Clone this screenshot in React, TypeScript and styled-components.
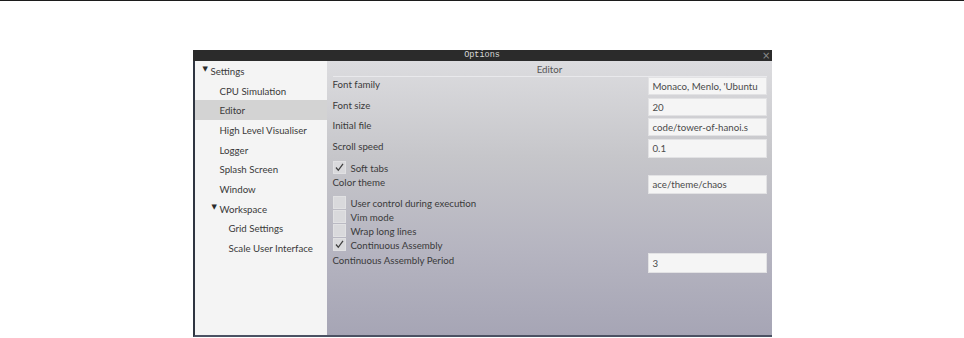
import React from 'react';
import styled, { createGlobalStyle } from 'styled-components';

const GlobalStyle = createGlobalStyle`
    html, body {
        margin: 0;
        padding: 0;
        background: #ffffff;
    }
    body {
        font-family: Lato, 'Noto Sans', sans-serif;
    }
`;

const Page = styled.div`
    display: flex;
    flex-direction: column;
    align-items: center;
    width: 964px;
    height: 338px;
    overflow: hidden;
    border-top: 1px solid #1c1c1c;
    box-sizing: border-box;
`;

const Window = styled.div`
    margin-top: 49px;
    width: 579px;
    display: flex;
    flex-direction: column;
    border-left: 2px solid #2f3541;
    border-bottom: 2px solid #4b5263;
    box-sizing: border-box;
`;

const TitleBar = styled.div`
    position: relative;
    height: 11px;
    background: #2b2b2b;
    display: flex;
    align-items: center;
    justify-content: center;
    color: #d8d8d8;
    font-family: 'Liberation Mono', 'DejaVu Sans Mono', monospace;
    font-size: 8.5px;
    line-height: 11px;
    margin-left: -2px;
`;

const CloseGlyph = styled.span`
    position: absolute;
    right: 1px;
    top: 0;
    color: #8c8c8c;
    font-family: 'DejaVu Sans', sans-serif;
    font-size: 10px;
    line-height: 11px;
`;

const Body = styled.div`
    display: flex;
    height: 274px;
`;

const Sidebar = styled.div`
    width: 132px;
    background: #f4f4f4;
    display: flex;
    flex-direction: column;
`;

const TreeRow = styled.div<{ level: number; selected?: boolean }>`
    display: flex;
    align-items: center;
    height: 19.7px;
    padding-left: ${p => 8 + p.level * 9}px;
    background: ${p => (p.selected ? '#d3d3d3' : 'transparent')};
    color: #3a3a3a;
    font-size: 9.7px;
    white-space: nowrap;
`;

const Arrow = styled.span`
    display: inline-block;
    width: 8px;
    font-family: 'DejaVu Sans', sans-serif;
    font-size: 7px;
    color: #2a2a2a;
    margin-top: -4px;
`;

const Content = styled.div`
    flex: 1;
    display: flex;
    flex-direction: column;
    padding: 0 5px 0 6px;
    background: linear-gradient(180deg, #dcdcdf 0%, #c6c6ca 35%, #b5b4c0 70%, #a6a5b5 100%);
    font-size: 9.7px;
    color: #3a3a3a;
`;

const PanelHeader = styled.div`
    height: 15px;
    display: flex;
    align-items: center;
    justify-content: center;
    color: #555555;
    border-bottom: 1px solid #e9e9ec;
`;

const FieldRow = styled.div<{ top?: number; bottom?: number }>`
    display: flex;
    justify-content: space-between;
    align-items: flex-start;
    margin-top: ${p => p.top ?? 0}px;
    margin-bottom: ${p => p.bottom ?? 2.5}px;
`;

const Label = styled.div`
    line-height: 14px;
    white-space: nowrap;
`;

const Input = styled.div<{ h?: number }>`
    width: 119px;
    height: ${p => p.h ?? 18}px;
    box-sizing: border-box;
    background: #f5f5f5;
    border: 1px solid #e2e2e4;
    color: #4a4a4a;
    padding-left: 4px;
    display: flex;
    align-items: center;
    overflow: hidden;
    white-space: nowrap;
`;

const CheckRow = styled.div<{ top?: number }>`
    display: flex;
    align-items: center;
    height: 14px;
    margin-top: ${p => p.top ?? 0}px;
`;

const Box = styled.div`
    width: 13px;
    height: 13px;
    background: #d9d9dc;
    border: 1px solid #e1e1e3;
    box-sizing: border-box;
    display: flex;
    align-items: center;
    justify-content: center;
    margin-right: 5px;
`;

const CheckLabel = styled.span`
    white-space: nowrap;
`;

const Check = () => (
    <svg width="11" height="11" viewBox="0 0 11 11">
        <polyline points="2,5.5 4.3,8.3 9,1.8" fill="none" stroke="#3f3f3f" strokeWidth="1.3" />
    </svg>
);

interface CheckboxProps {
    label: string;
    checked?: boolean;
    top?: number;
}

const Checkbox = ({ label, checked, top }: CheckboxProps) => (
    <CheckRow top={top}>
        <Box>{checked && <Check />}</Box>
        <CheckLabel>{label}</CheckLabel>
    </CheckRow>
);

const tree: { label: string; level: number; open?: boolean; selected?: boolean }[] = [
    { label: 'Settings', level: 0, open: true },
    { label: 'CPU Simulation', level: 1 },
    { label: 'Editor', level: 1, selected: true },
    { label: 'High Level Visualiser', level: 1 },
    { label: 'Logger', level: 1 },
    { label: 'Splash Screen', level: 1 },
    { label: 'Window', level: 1 },
    { label: 'Workspace', level: 1, open: true },
    { label: 'Grid Settings', level: 2 },
    { label: 'Scale User Interface', level: 2 },
];

const App = () => (
    <>
        <GlobalStyle />
        <Page>
            <Window>
                <TitleBar>
                    Options
                    <CloseGlyph>×</CloseGlyph>
                </TitleBar>
                <Body>
                    <Sidebar>
                        {tree.map(item => (
                            <TreeRow key={item.label} level={item.level} selected={item.selected}>
                                <Arrow>{item.open ? '▼' : ''}</Arrow>
                                {item.label}
                            </TreeRow>
                        ))}
                    </Sidebar>
                    <Content>
                        <PanelHeader>Editor</PanelHeader>
                        <FieldRow>
                            <Label>Font family</Label>
                            <Input>Monaco, Menlo, 'Ubuntu</Input>
                        </FieldRow>
                        <FieldRow>
                            <Label>Font size</Label>
                            <Input>20</Input>
                        </FieldRow>
                        <FieldRow>
                            <Label>Initial file</Label>
                            <Input>code/tower-of-hanoi.s</Input>
                        </FieldRow>
                        <FieldRow bottom={3}>
                            <Label>Scroll speed</Label>
                            <Input h={19}>0.1</Input>
                        </FieldRow>
                        <Checkbox label="Soft tabs" checked />
                        <FieldRow bottom={2}>
                            <Label>Color theme</Label>
                            <Input h={19}>ace/theme/chaos</Input>
                        </FieldRow>
                        <Checkbox label="User control during execution" />
                        <Checkbox label="Vim mode" />
                        <Checkbox label="Wrap long lines" />
                        <Checkbox label="Continuous Assembly" checked />
                        <FieldRow top={1}>
                            <Label>Continuous Assembly Period</Label>
                            <Input h={20}>3</Input>
                        </FieldRow>
                    </Content>
                </Body>
            </Window>
        </Page>
    </>
);

export default App;
